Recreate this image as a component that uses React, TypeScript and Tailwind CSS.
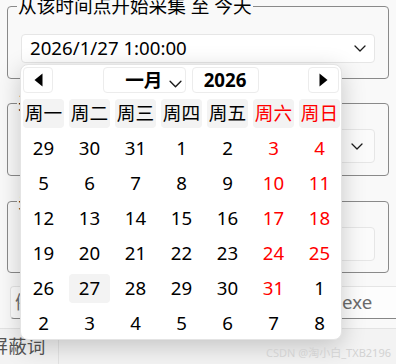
import React from "react";

const weekdays = ["周一", "周二", "周三", "周四", "周五", "周六", "周日"];

// day number + whether it belongs to the shown month
const days: [number, boolean][] = [
  [29, false], [30, false], [31, false], [1, true], [2, true], [3, true], [4, true],
  [5, true], [6, true], [7, true], [8, true], [9, true], [10, true], [11, true],
  [12, true], [13, true], [14, true], [15, true], [16, true], [17, true], [18, true],
  [19, true], [20, true], [21, true], [22, true], [23, true], [24, true], [25, true],
  [26, true], [27, true], [28, true], [29, true], [30, true], [31, true], [1, false],
  [2, false], [3, false], [4, false], [5, false], [6, false], [7, false], [8, false],
];

function Chevron({ className }: { className?: string }) {
  return (
    <svg className={className} viewBox="0 0 12 7" fill="none">
      <path d="M1 1l5 5 5-5" stroke="#1b1b1b" strokeWidth="1.3" strokeLinecap="round" strokeLinejoin="round" />
    </svg>
  );
}

function Calendar() {
  return (
    <div className="absolute left-[20px] top-[64px] w-[322px] h-[276px] bg-white rounded-[8px] border border-[#e4e4e4] shadow-[0_6px_24px_rgba(0,0,0,0.2)] px-[1px] pt-[2px] pb-[1px]">
      {/* header */}
      <div className="flex items-center justify-between h-[26px] px-[1px]">
        <button className="w-[30px] h-[26px] rounded-[4px] border border-[#ececec] bg-white flex items-center justify-center">
          <svg width="9" height="14" viewBox="0 0 9 14">
            <path d="M8.5 0.5v13L0.5 7z" fill="#000" />
          </svg>
        </button>
        <div className="flex items-center gap-[6px]">
          <button className="w-[83px] h-[26px] rounded-[4px] border border-[#ececec] bg-white flex items-center justify-end pr-[3px] gap-[6px]">
            <span className="font-bold leading-none">一月</span>
            <Chevron className="w-[13px] h-[8px] mt-[7px]" />
          </button>
          <div className="w-[67px] h-[26px] rounded-[4px] border border-[#ececec] bg-white flex items-center justify-center font-bold leading-none">
            2026
          </div>
        </div>
        <button className="w-[31px] h-[26px] rounded-[4px] border border-[#ececec] bg-white flex items-center justify-center">
          <svg width="9" height="14" viewBox="0 0 9 14">
            <path d="M0.5 0.5v13L8.5 7z" fill="#000" />
          </svg>
        </button>
      </div>

      {/* weekday header */}
      <div className="grid grid-cols-[repeat(7,41px)] gap-x-[5px] mt-[6px] px-[1px]">
        {weekdays.map((w, i) => (
          <div
            key={w}
            className={`h-[29px] rounded-[4px] bg-[#f3f3f3] flex items-center justify-center leading-none ${i >= 5 ? "text-[#ff0000]" : "text-black"}`}
          >
            {w}
          </div>
        ))}
      </div>

      {/* days */}
      <div className="grid grid-cols-[repeat(7,41px)] gap-x-[5px] gap-y-[6px] mt-[6px] px-[1px]">
        {days.map(([d, cur], i) => {
          const weekend = i % 7 >= 5 && cur;
          const selected = cur && d === 27;
          return (
            <div
              key={i}
              className={`h-[29px] rounded-[4px] flex items-center justify-center leading-none ${weekend ? "text-[#ff0000]" : "text-black"} ${selected ? "bg-[#f3f3f3]" : ""}`}
            >
              {d}
            </div>
          );
        })}
      </div>
    </div>
  );
}

export default function App() {
  return (
    <div
      className="relative w-[396px] h-[364px] overflow-hidden bg-[#f9f9f9] text-[18.67px] text-black flex flex-col"
      style={{ fontFamily: '"Noto Sans", "Noto Sans CJK SC", sans-serif' }}
    >
      <div className="flex flex-col px-[7px]">
        {/* 采集起点 */}
        <fieldset className="border border-[#8a8a8a] rounded-[4px] pb-[15px]">
          <legend className="ml-[9px] px-[1px] leading-[12px]">从该时间点开始采集 至 今天</legend>
          <div className="px-[13px] pt-[22px]">
            <div className="h-[29px] rounded-[4px] border border-[#e6e6e6] bg-white flex items-center justify-between pl-[8px] pr-[8px]">
              <span className="leading-none">2026/1/27 1:00:00</span>
              <Chevron className="w-[12px] h-[7px]" />
            </div>
          </div>
        </fieldset>

        {/* 采集方式 */}
        <fieldset className="mt-[18px] border border-[#8a8a8a] rounded-[4px] pb-[12px]">
          <legend className="ml-[9px] px-[1px] leading-[12px]">采集方式</legend>
          <div className="px-[13px] pt-[20px]">
            <div className="h-[34px] rounded-[4px] border border-[#e6e6e6] bg-[#fbfbfb] flex items-center justify-between pl-[8px] pr-[11px]">
              <span className="leading-none">全部</span>
              <Chevron className="w-[12px] h-[7px]" />
            </div>
          </div>
        </fieldset>

        {/* 关键词 */}
        <fieldset className="mt-[19px] border border-[#8a8a8a] rounded-[4px] pb-[11px]">
          <legend className="ml-[9px] px-[1px] leading-[12px]">关键词</legend>
          <div className="px-[13px] pt-[20px]">
            <div className="h-[34px] rounded-[4px] border border-[#e6e6e6] bg-[#fbfbfb]" />
          </div>
        </fieldset>
      </div>

      {/* 程序路径 */}
      <div className="ml-[10px] mt-[13px] w-[400px] h-[33px] rounded-l-[4px] border border-[#e5e5e5] border-b-[#868686] bg-[#fdfdfd] flex items-center pl-[4px] shrink-0">
        <span className="text-[#6b6b6b] leading-none whitespace-nowrap">例如：C:\Program Files\Tools\wechat.exe</span>
      </div>

      {/* tabs */}
      <div className="mt-[9px] flex-1 border-t border-[#e3e3e3] bg-[#f3f3f3] flex">
        <div className="-ml-[23px] w-[82px] border-r border-[#e3e3e3] flex items-center justify-center text-[#555] leading-none">
          屏蔽词
        </div>
      </div>

      <Calendar />

      <div className="absolute right-[5px] bottom-[6px] text-[11px] leading-none text-[#d2d2d2]">
        CSDN @淘小白_TXB2196
      </div>
    </div>
  );
}
